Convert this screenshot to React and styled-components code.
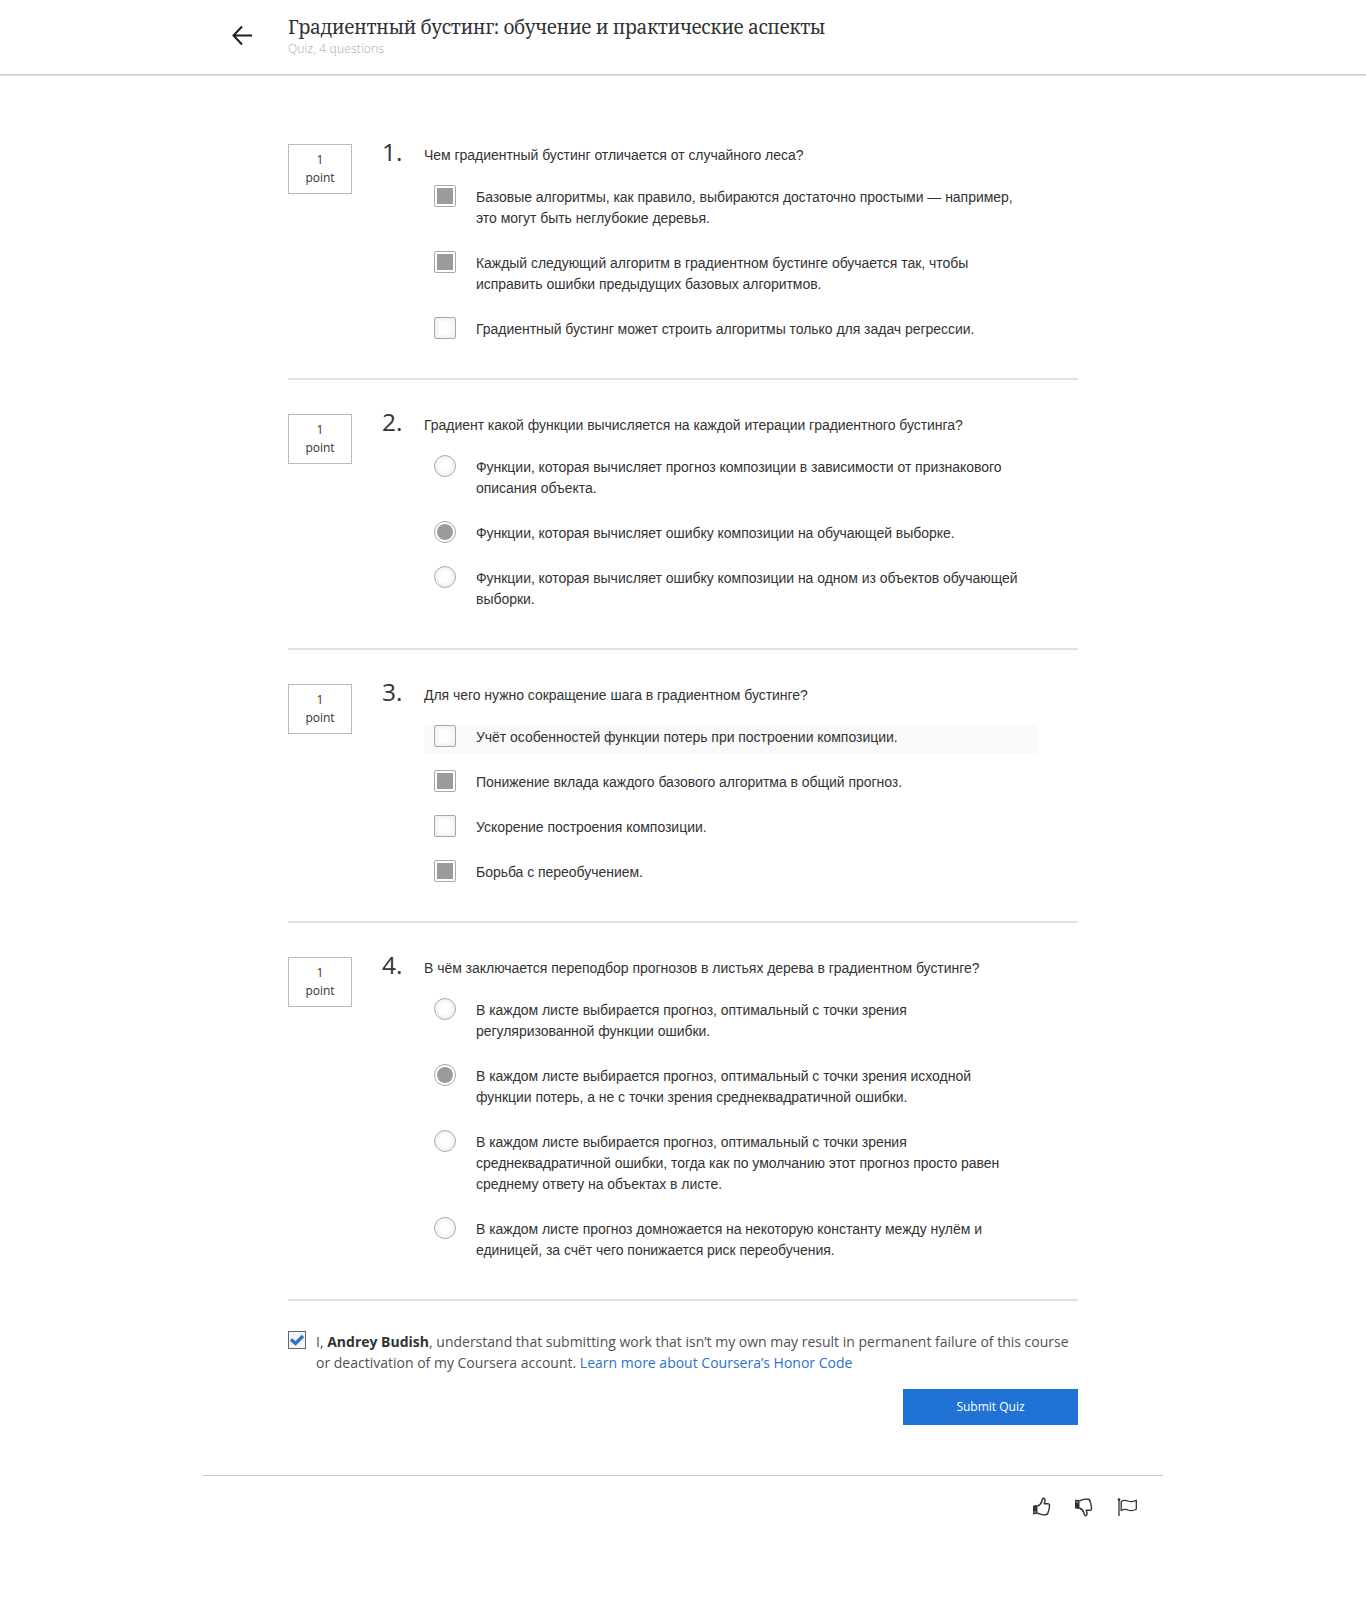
import React from 'react';
import styled, { createGlobalStyle, css } from 'styled-components';

const GlobalStyle = createGlobalStyle`
  *, *::before, *::after { box-sizing: border-box; }
  body {
    margin: 0;
    background: #fff;
    color: #333;
    font-family: "Open Sans", "Noto Sans", sans-serif;
  }
  h1, h2, p, ul { margin: 0; padding: 0; font-weight: 400; }
`;

const Page = styled.div`
  min-height: 1601px;
  display: flex;
  flex-direction: column;
`;

const Header = styled.header`
  height: 76px;
  border-bottom: 1px solid #e6e6e6;
  box-shadow: inset 0 -1px 0 #cbcbcb;
  display: flex;
  padding: 15px 0 0 230px;
`;

const BackLink = styled.a`
  width: 58px;
  padding-top: 8px;
  svg { display: block; }
`;

const Heading = styled.div`
  display: flex;
  flex-direction: column;
`;

const Title = styled.h1`
  font-family: "Noto Serif", "Liberation Serif", "DejaVu Serif", serif;
  font-size: 19px;
  line-height: 25px;
  letter-spacing: -0.385px;
  white-space: nowrap;
`;

const Subtitle = styled.p`
  font-size: 12px;
  font-weight: 300;
  line-height: 18px;
  letter-spacing: 0.18px;
  color: #a8a8a8;
`;

const Quiz = styled.main`
  width: 790px;
  margin: 68px auto 0;
  display: flex;
  flex-direction: column;
`;

const Question = styled.section`
  display: flex;
  padding-bottom: 32px;
  margin-bottom: 34px;
  border-bottom: 2px solid #e1e1e1;
`;

const Points = styled.div`
  width: 64px;
  height: 50px;
  border: 1px solid #bbb;
  padding-top: 6px;
  text-align: center;
  font-size: 12px;
  line-height: 18px;
`;

const Number = styled.div`
  width: 72px;
  padding-left: 30px;
  font-size: 24.5px;
  line-height: 15px;
`;

const Body = styled.div`
  width: 614px;
  padding-top: 1px;
  font-family: "Liberation Sans", Arial, sans-serif;
  font-size: 14px;
  line-height: 21px;
  letter-spacing: -0.035px;
`;

const Prompt = styled.h2`
  font-size: 14px;
  line-height: 21px;
  white-space: nowrap;
`;

const Line = styled.span`
  display: block;
  white-space: nowrap;
`;

const Options = styled.ul`
  list-style: none;
  margin-top: 19px;
  display: flex;
  flex-direction: column;
  gap: 16px;
`;

const Option = styled.li`
  display: flex;
  gap: 20px;
  padding: 0 0 6px 10px;
  border-radius: 0 0 4px 4px;
  background: ${(p) => (p.$hovered ? '#f9f9f9' : 'transparent')};
`;

const OptionText = styled.div`
  padding-top: 2px;
`;

const Mark = styled.span`
  flex: none;
  width: 22px;
  height: 22px;
  border: 1px solid #a9a9a9;
  border-radius: ${(p) => (p.$round ? '50%' : '2px')};
  display: flex;
  align-items: center;
  justify-content: center;
  background: #fff;
  ${(p) => p.$checked
    ? css`
        &::after {
          content: '';
          width: 16px;
          height: 16px;
          border-radius: ${p.$round ? '50%' : '0'};
          background: #9b9b9b;
        }
      `
    : css`box-shadow: inset 0 0 4px 2px #eee;`}
`;

const Honor = styled.div`
  display: flex;
  gap: 10px;
  margin-top: -4px;
`;

const HonorCheck = styled.span`
  flex: none;
  width: 18px;
  height: 18px;
  border: 1px solid #666;
  background: #f5f5f5;
  svg { display: block; }
`;

const HonorText = styled.div`
  font-size: 14px;
  line-height: 21px;
  color: #525252;
  b { color: #333; font-weight: 700; }
  a { color: #2a73cc; }
`;

const Submit = styled.button`
  align-self: flex-end;
  width: 175px;
  height: 36px;
  margin-top: 16px;
  padding: 0;
  border: 0;
  background: #2073d5;
  color: #fff;
  font: 12px/36px "Open Sans", sans-serif;
`;

const Footer = styled.footer`
  width: 960px;
  margin: 50px auto 0;
  border-top: 1px solid #c9c9c9;
  display: flex;
  justify-content: flex-end;
  gap: 22px;
  padding: 21px 25px 0 0;
  svg { display: block; }
`;

const questions = [
  {
    title: 'Чем градиентный бустинг отличается от случайного леса?',
    options: [
      { checked: true, lines: ['Базовые алгоритмы, как правило, выбираются достаточно простыми — например,', 'это могут быть неглубокие деревья.'] },
      { checked: true, lines: ['Каждый следующий алгоритм в градиентном бустинге обучается так, чтобы', 'исправить ошибки предыдущих базовых алгоритмов.'] },
      { lines: ['Градиентный бустинг может строить алгоритмы только для задач регрессии.'] },
    ],
  },
  {
    round: true,
    title: 'Градиент какой функции вычисляется на каждой итерации градиентного бустинга?',
    options: [
      { lines: ['Функции, которая вычисляет прогноз композиции в зависимости от признакового', 'описания объекта.'] },
      { checked: true, lines: ['Функции, которая вычисляет ошибку композиции на обучающей выборке.'] },
      { lines: ['Функции, которая вычисляет ошибку композиции на одном из объектов обучающей', 'выборки.'] },
    ],
  },
  {
    title: 'Для чего нужно сокращение шага в градиентном бустинге?',
    options: [
      { hovered: true, lines: ['Учёт особенностей функции потерь при построении композиции.'] },
      { checked: true, lines: ['Понижение вклада каждого базового алгоритма в общий прогноз.'] },
      { lines: ['Ускорение построения композиции.'] },
      { checked: true, lines: ['Борьба с переобучением.'] },
    ],
  },
  {
    round: true,
    title: 'В чём заключается переподбор прогнозов в листьях дерева в градиентном бустинге?',
    options: [
      { lines: ['В каждом листе выбирается прогноз, оптимальный с точки зрения', 'регуляризованной функции ошибки.'] },
      { checked: true, lines: ['В каждом листе выбирается прогноз, оптимальный с точки зрения исходной', 'функции потерь, а не с точки зрения среднеквадратичной ошибки.'] },
      { lines: ['В каждом листе выбирается прогноз, оптимальный с точки зрения', 'среднеквадратичной ошибки, тогда как по умолчанию этот прогноз просто равен', 'среднему ответу на объектах в листе.'] },
      { lines: ['В каждом листе прогноз домножается на некоторую константу между нулём и', 'единицей, за счёт чего понижается риск переобучения.'] },
    ],
  },
];

const Thumb = ({ down }) => (
  <svg width="20" height="20" viewBox="0 0 20 20" fill="none" stroke="#333" strokeWidth="1.4" strokeLinejoin="round">
    <g transform={down ? 'matrix(1 0 0 -1 0 20)' : undefined}>
      <path d="M1.700 9.200L4.800 8.800V16.300L1.700 16.600z" fill="#333" />
      <circle cx="3" cy="15" r="0.700" fill="#fff" stroke="none" />
      <path d="M5.300 9C7.500 8.300 9.300 6.300 9.900 4C10.200 2.300 10.400 1.300 11.400 1.300C12.900 1.400 13.300 3 12.900 4.500L12.300 6.800L16 6.600C17.500 6.700 17.800 8 17.300 9.300C17.700 10.500 17.400 11.500 16.900 12.200C17.100 13.300 16.800 14.200 16.200 14.800C16.200 16.500 15.300 17.600 13.800 17.700L11 17.900C9 18 7.500 16.300 5.300 16.300" />
    </g>
  </svg>
);

export default function App() {
  return (
    <Page>
      <GlobalStyle />
      <Header>
        <BackLink>
          <svg width="24" height="24" viewBox="0 0 24 24" fill="none" stroke="#1f1f1f" strokeWidth="2">
            <path d="M22 12.500H3.500M12 3.500L3.500 12.500L12 21.500" />
          </svg>
        </BackLink>
        <Heading>
          <Title>Градиентный бустинг: обучение и практические аспекты</Title>
          <Subtitle>Quiz, 4 questions</Subtitle>
        </Heading>
      </Header>
      <Quiz>
        {questions.map((q, i) => (
          <Question key={q.title}>
            <Points>1<br />point</Points>
            <Number>{i + 1}.</Number>
            <Body>
              <Prompt>{q.title}</Prompt>
              <Options>
                {q.options.map((o) => (
                  <Option key={o.lines.join()} $hovered={o.hovered}>
                    <Mark $round={q.round} $checked={o.checked} />
                    <OptionText>{o.lines.map((l) => <Line key={l}>{l}</Line>)}</OptionText>
                  </Option>
                ))}
              </Options>
            </Body>
          </Question>
        ))}
        <Honor>
          <HonorCheck>
            <svg width="16" height="16" viewBox="0 0 16 16"><path d="M2 7.500L6.500 11.500L14 4" fill="none" stroke="#2a73cc" strokeWidth="3.400" /></svg>
          </HonorCheck>
          <HonorText>
            <Line>I, <b>Andrey Budish</b>, understand that submitting work that isn’t my own may result in permanent failure of this course</Line>
            <Line>or deactivation of my Coursera account. <a>Learn more about Coursera’s Honor Code</a></Line>
          </HonorText>
        </Honor>
        <Submit>Submit Quiz</Submit>
      </Quiz>
      <Footer>
        <Thumb />
        <Thumb down />
        <svg width="22" height="20" viewBox="0 0 22 20" fill="none" stroke="#333" strokeWidth="1.300">
          <path d="M3 3V19" />
          <circle cx="3" cy="2.500" r="1.300" fill="#333" stroke="none" />
          <path d="M5.200 4.500C7.500 3 9.500 3 12 4C14.500 5 17.500 4.700 20.300 3.200V12.300C17.500 13.800 14.500 14 12 13C9.500 12 7.500 12.200 5.200 13.500Z" strokeLinejoin="round" />
        </svg>
      </Footer>
    </Page>
  );
}
